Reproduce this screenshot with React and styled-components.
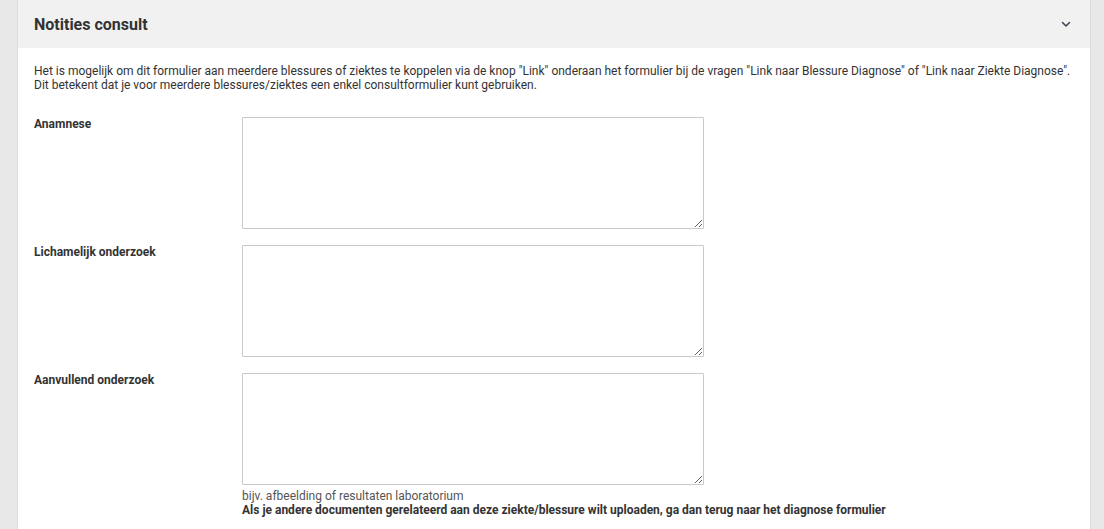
import React from 'react'
import styled, { createGlobalStyle } from 'styled-components'

const GlobalStyle = createGlobalStyle`
  html, body {
    margin: 0;
    padding: 0;
    background: #e8e8e8;
    font-family: Roboto, "Liberation Sans", Arial, sans-serif;
    color: #333;
  }
`

const Page = styled.div`
  padding: 0 13px 0 17px;
  min-height: 529px;
  box-sizing: border-box;
`

const Card = styled.section`
  background: #fff;
  border-left: 1px solid #dcdcdc;
  border-right: 1px solid #dcdcdc;
  min-height: 529px;
`

const Header = styled.div`
  display: flex;
  align-items: center;
  justify-content: space-between;
  height: 48px;
  padding: 0 18px 0 16px;
  background: #f1f1f1;
`

const Title = styled.h2`
  margin: 0;
  font-size: 16px;
  font-weight: 700;
  color: #333;
`

const Toggle = styled.button`
  display: flex;
  align-items: center;
  justify-content: center;
  border: 0;
  padding: 0;
  background: none;
  color: #3a4250;
  cursor: pointer;
`

const Body = styled.div`
  padding: 16px 16px 20px;
`

const Intro = styled.p`
  margin: 0 0 25px;
  font-size: 12px;
  line-height: 14px;
  color: #333;
`

const Fields = styled.div`
  display: flex;
  flex-direction: column;
  gap: 16px;
`

const Row = styled.div`
  display: grid;
  grid-template-columns: 208px 1fr;
`

const Label = styled.label`
  padding-top: 0;
  font-size: 12px;
  font-weight: 700;
  line-height: 14px;
  color: #333;
`

const Area = styled.textarea`
  display: block;
  width: 462px;
  height: 112px;
  box-sizing: border-box;
  border: 1px solid #c9c9c9;
  border-radius: 1px;
  font-family: inherit;
  font-size: 12px;
  resize: vertical;
`

const Hint = styled.div`
  margin-top: 4px;
  font-size: 12px;
  line-height: 14px;
  color: #555;
`

const Note = styled.div`
  font-size: 12px;
  line-height: 14px;
  font-weight: 700;
  color: #333;
  white-space: nowrap;
`

const fields = [
  { label: 'Anamnese' },
  { label: 'Lichamelijk onderzoek' },
  { label: 'Aanvullend onderzoek', hint: true },
]

function Chevron() {
  return (
    <svg width="12" height="12" viewBox="0 0 12 12" fill="none">
      <path d="M2.5 4.5 6 8l3.5-3.5" stroke="currentColor" strokeWidth="1.5" strokeLinecap="round" strokeLinejoin="round" />
    </svg>
  )
}

export default function App() {
  return (
    <Page>
      <GlobalStyle />
      <Card>
        <Header>
          <Title>Notities consult</Title>
          <Toggle aria-label="Inklappen">
            <Chevron />
          </Toggle>
        </Header>
        <Body>
          <Intro>
            Het is mogelijk om dit formulier aan meerdere blessures of ziektes te koppelen via de knop "Link" onderaan het formulier bij de vragen "Link naar Blessure Diagnose" of "Link naar Ziekte Diagnose".
            <br />
            Dit betekent dat je voor meerdere blessures/ziektes een enkel consultformulier kunt gebruiken.
          </Intro>
          <Fields>
            {fields.map((f) => (
              <Row key={f.label}>
                <Label>{f.label}</Label>
                <div>
                  <Area />
                  {f.hint && (
                    <>
                      <Hint>bijv. afbeelding of resultaten laboratorium</Hint>
                      <Note>Als je andere documenten gerelateerd aan deze ziekte/blessure wilt uploaden, ga dan terug naar het diagnose formulier</Note>
                    </>
                  )}
                </div>
              </Row>
            ))}
          </Fields>
        </Body>
      </Card>
    </Page>
  )
}
